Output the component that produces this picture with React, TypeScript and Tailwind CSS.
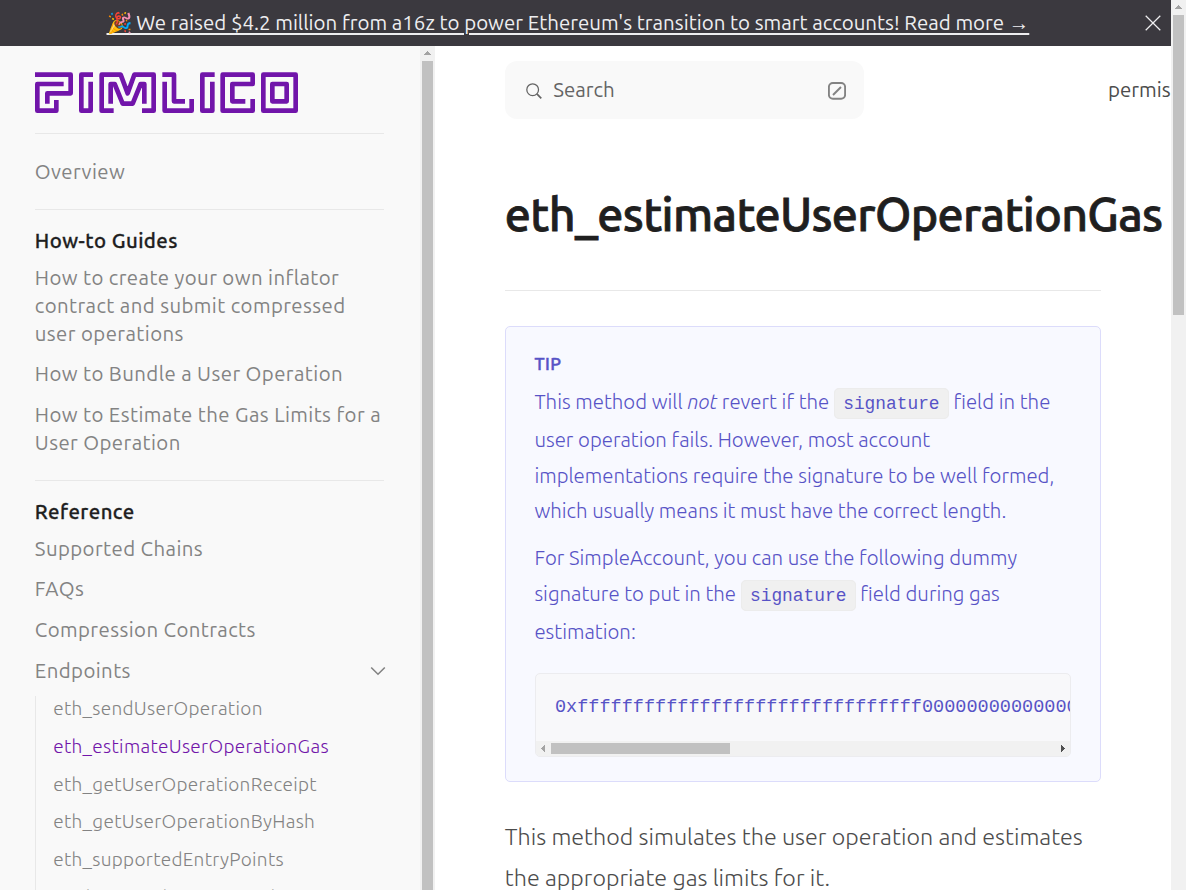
import type { ReactNode } from "react";

function Logo() {
  return (
    <svg viewBox="45 36 789 123" className="block h-[41px] w-[263px]" fill="none" stroke="#7115aa" strokeWidth="14" strokeLinejoin="round">
      <path d="M45 44H152V100H82V131M131 72H52V152H109V120" />
      <path d="M219 44H184V152H212V65" />
      <path d="M281 152H245V44H302L323 100L343 44H401V152H366M272 131V72H284L308 131H338L362 72H373V131" />
      <path d="M427 44H462V124H495M434 65V152H515V117" />
      <path d="M584 44H547V152H577V65" />
      <path d="M698 117V152H608V44H698V72H637V124H676" />
      <path d="M730 44H827V152H730ZM757 72H800V124H757Z" />
    </svg>
  );
}

function Arrow({ dir, color }: { dir: "up" | "left" | "right"; color: string }) {
  const d = { up: "M4 9L7.5 5L11 9Z", left: "M9 4L5 7.5L9 11Z", right: "M6 4L10 7.5L6 11Z" }[dir];
  return (
    <svg viewBox="0 0 15 15" className="block size-[15px] shrink-0" fill={color} shapeRendering="crispEdges">
      <path d={d} />
    </svg>
  );
}

function Item({ lines }: { lines: string[] }) {
  return (
    <a className="mb-[12.6px] block text-[#838383]">
      {lines.map((l) => (
        <span key={l} className="block whitespace-nowrap">{l}</span>
      ))}
    </a>
  );
}

const endpoints = [
  "eth_sendUserOperation",
  "eth_estimateUserOperationGas",
  "eth_getUserOperationReceipt",
  "eth_getUserOperationByHash",
  "eth_supportedEntryPoints",
  "pimlico_sendCompressedUserOperation",
];

function Sidebar() {
  return (
    <aside className="flex w-[435px] shrink-0 overflow-hidden bg-[#f9f9f9]">
      <nav className="w-[420px] pl-[34.8px] pr-9 pt-[26px] text-[20.4px] leading-[28px] tracking-[0.41px]">
        <Logo />
        <div className="mt-5 h-px bg-[#e8e8e8]" />
        <a className="mt-[24px] block text-[#838383]">Overview</a>
        <div className="mt-[23px] h-px bg-[#e8e8e8]" />
        <h2 className="mb-[8.6px] mt-[17px] font-medium tracking-[0.46px] text-[#1f1f1f] [-webkit-text-stroke:0.3px]">How-to Guides</h2>
        <Item lines={["How to create your own inflator", "contract and submit compressed", "user operations"]} />
        <Item lines={["How to Bundle a User Operation"]} />
        <Item lines={["How to Estimate the Gas Limits for a", "User Operation"]} />
        <div className="mt-[23.4px] h-px bg-[#e8e8e8]" />
        <h2 className="mb-[8.6px] mt-[17px] font-medium tracking-[0.46px] text-[#1f1f1f] [-webkit-text-stroke:0.3px]">Reference</h2>
        <Item lines={["Supported Chains"]} />
        <Item lines={["FAQs"]} />
        <Item lines={["Compression Contracts"]} />
        <div className="flex items-center justify-between text-[#838383]">
          <span>Endpoints</span>
          <svg viewBox="0 0 16 10" className="mr-[-2px] h-[10px] w-4" fill="none" stroke="#838383" strokeWidth="1.6">
            <path d="M1.2 1.5L8 8.2L14.8 1.5" />
          </svg>
        </div>
        <ul className="mt-[11.6px] border-l border-[#e8e8e8] pl-[17.4px] text-[19.02px] font-light leading-[25.7px] tracking-[0.31px]">
          {endpoints.map((e, i) => (
            <li key={e} className={i === 1 ? "mb-[12.05px] text-[#7115aa]" : "mb-[12.05px] text-[#838383]"}>{e}</li>
          ))}
        </ul>
      </nav>
      <div className="flex w-[15px] flex-col items-center bg-[#f1f1f1]">
        <Arrow dir="up" color="#a3a3a3" />
        <div className="w-[11px] flex-1 bg-[#c1c1c1]" />
      </div>
    </aside>
  );
}

function Code({ children }: { children: ReactNode }) {
  return (
    <code className="rounded-[5px] border border-[#ececec] bg-[#f0f0f0] px-[8.3px] py-[4.5px] align-[0.6px] font-['Liberation_Mono',monospace] text-[17.85px] font-normal leading-none">
      {children}
    </code>
  );
}

function Tip() {
  return (
    <section className="mt-[35px] h-[456px] w-[596px] rounded-[5px] border border-[#dcdcfb] bg-[#f8f9ff] pl-[28.6px] pr-[29px] pt-[24px] text-[20.43px] font-light leading-[35.7px] text-[#5753c6]">
      <div className="h-[26px] text-[17.5px] font-medium leading-[26px] tracking-[0.5px] [-webkit-text-stroke:0.45px]">TIP</div>
      <div className="whitespace-nowrap pt-[7px]">
        <p className="h-[38px]">This method will <em>not</em> revert if the <Code>signature</Code> field in the</p>
        <p>user operation fails. However, most account</p>
        <p>implementations require the signature to be well formed,</p>
        <p>which usually means it must have the correct length.</p>
      </div>
      <div className="whitespace-nowrap pt-[11.1px]">
        <p>For SimpleAccount, you can use the following dummy</p>
        <p className="h-[38.4px]">signature to put in the <Code>signature</Code> field during gas</p>
        <p>estimation:</p>
      </div>
      <div className="ml-[0.6px] mt-[23px] flex h-[84px] w-[536px] flex-col overflow-hidden rounded-[5px] border border-[#ececef] bg-[#f8f8fa]">
        <pre className="h-[67px] flex-none overflow-hidden pl-[19px] font-['Liberation_Mono',monospace] text-[18.54px] font-normal leading-[67px]">
          {"0x" + "f".repeat(31) + "0".repeat(30)}
        </pre>
        <div className="flex h-[15px] items-center bg-[#f1f1f1]">
          <Arrow dir="left" color="#a3a3a3" />
          <div className="h-[11px] w-[179px] bg-[#c1c1c1]" />
          <div className="flex-1" />
          <Arrow dir="right" color="#505050" />
        </div>
      </div>
    </section>
  );
}

function Content() {
  return (
    <main className="min-w-0 flex-1 overflow-hidden bg-white pl-[69.8px]">
      <div className="flex items-center pt-[15px]">
        <div className="flex h-[58px] w-[359px] shrink-0 items-center rounded-[12px] bg-[#f9f9f9] pl-[21px] pr-[18px] text-[20.5px] text-[#646464]">
          <svg viewBox="0 0 18 18" className="mr-[11.4px] mt-[2px] size-4" fill="none" stroke="#646464" strokeWidth="1.4">
            <circle cx="7.5" cy="7.5" r="6.6" />
            <path d="M12.2 12.2L17.2 17.2" strokeWidth="1.9" />
          </svg>
          <span className="flex-1">Search</span>
          <svg viewBox="0 0 18 18" className="mt-px size-[18px]" fill="none" stroke="#838383" strokeWidth="1.9">
            <rect x="0.9" y="1" width="16.2" height="15.8" rx="4" />
            <path d="M5 13L13 5" />
          </svg>
        </div>
        <span className="ml-[244.2px] shrink-0 text-[20.5px] text-[#4c4c4c]">permissionless.js</span>
      </div>
      <h1 className="mt-[65px] whitespace-nowrap text-[46.6px] font-medium leading-[60px] tracking-[-0.67px] text-[#1f1f1f] [-webkit-text-stroke:0.8px]">
        eth_estimateUserOperationGas
      </h1>
      <div className="mt-[46px] h-px w-[596px] bg-[#e8e8e8]" />
      <Tip />
      <div className="mt-[34.4px] whitespace-nowrap text-[23.3px] font-light leading-[40.8px] text-[#4c4c4c]">
        <p>This method simulates the user operation and estimates</p>
        <p>the appropriate gas limits for it.</p>
      </div>
    </main>
  );
}

export default function App() {
  return (
    <div className="flex h-[890px] w-[1186px] overflow-hidden font-['Ubuntu','Noto_Sans',sans-serif]">
      <div className="flex w-[1171px] shrink-0 flex-col">
        <header className="flex h-[46px] shrink-0 items-center bg-[#3b393f] text-[20.48px] text-[#eeeef0]">
          <a className="ml-[106.5px] flex-1 whitespace-nowrap underline decoration-2 underline-offset-[3px]">
            🎉 We raised $4.2 million from a16z to power Ethereum's transition to smart accounts! Read more →
          </a>
          <svg viewBox="0 0 16 16" className="mr-[10px] size-4" fill="none" stroke="#eeeef0" strokeWidth="1.25">
            <path d="M0.7 0.7L15.3 15.3M15.3 0.7L0.7 15.3" />
          </svg>
        </header>
        <div className="flex min-h-0 flex-1">
          <Sidebar />
          <Content />
        </div>
      </div>
      <div className="flex w-[15px] shrink-0 flex-col items-center bg-[#f1f1f1]">
        <Arrow dir="up" color="#a3a3a3" />
        <div className="h-[300px] w-[11px] bg-[#c1c1c1]" />
      </div>
    </div>
  );
}
